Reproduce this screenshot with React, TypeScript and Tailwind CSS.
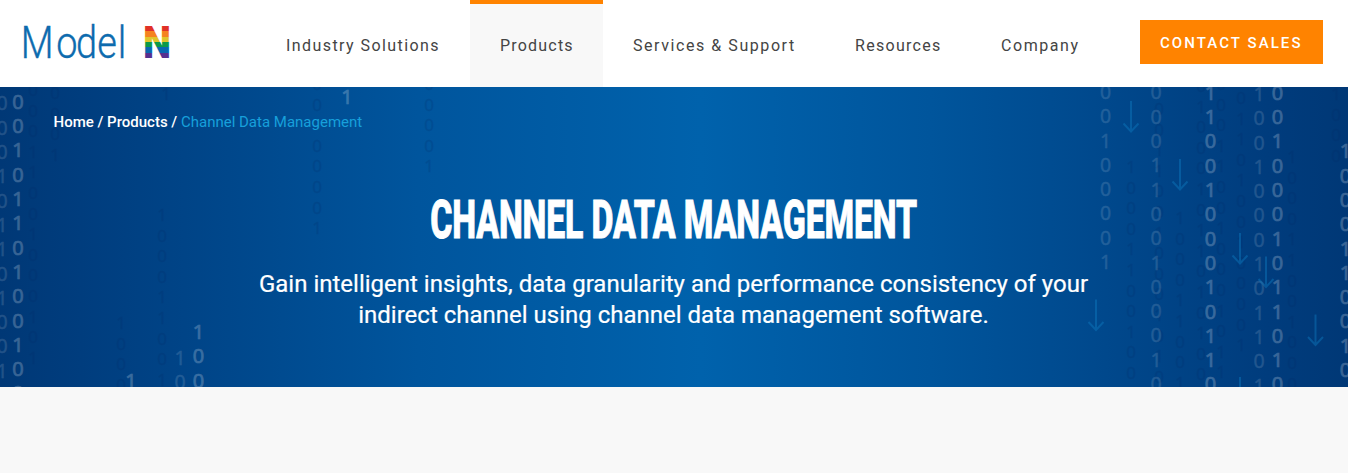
type Stream = { x: number; y: number; bits: string; tone: "bright" | "soft" | "dark" };

const streams: Stream[] = [
  { x: 33, y: 90, bits: "00011001000101", tone: "dark" },
  { x: 55, y: 93, bits: "0001", tone: "dark" },
  { x: 121, y: 323, bits: "1000", tone: "dark" },
  { x: 162, y: 215, bits: "100011001", tone: "dark" },
  { x: 166, y: 94, bits: "1", tone: "dark" },
  { x: 317, y: 84, bits: "00 00001", tone: "dark" },
  { x: 429, y: 84, bits: "00001", tone: "dark" },
  { x: 1131, y: 167, bits: "10001100100", tone: "dark" },
  { x: 1159, y: 109, bits: "00110010001010", tone: "dark" },
  { x: 1180, y: 218, bits: "100011001", tone: "dark" },
  { x: 1201, y: 86, bits: "010001011010100", tone: "dark" },
  { x: 1221, y: 84, bits: "000110010001011", tone: "dark" },
  { x: 1241, y: 98, bits: "0110100100001", tone: "dark" },
  { x: 1292, y: 157, bits: "100011001000", tone: "dark" },
  { x: 1336, y: 94, bits: "1000", tone: "dark" },
  { x: 2, y: 103.5, bits: "000101101001", tone: "soft" },
  { x: 180, y: 358, bits: "10", tone: "soft" },
  { x: 1105.5, y: 92, bits: "00100001", tone: "soft" },
  { x: 1156, y: 92.5, bits: "0001100100010", tone: "soft" },
  { x: 1259, y: 94, bits: "1001000101101", tone: "soft" },
  { x: 18, y: 101.7, bits: "0010110100100", tone: "bright" },
  { x: 131, y: 380.7, bits: "1", tone: "bright" },
  { x: 198.5, y: 332, bits: "100", tone: "bright" },
  { x: 347, y: 97, bits: "1", tone: "bright" },
  { x: 1210.5, y: 92.7, bits: "1100100010110", tone: "bright" },
  { x: 1277.5, y: 92.7, bits: "0010001011010", tone: "bright" },
  { x: 1345.5, y: 151.2, bits: "1000110010", tone: "bright" },
];

const tones = {
  bright: { fill: "#ffffff", opacity: 0.22, pitch: 24.3, size: 20, weight: 500 },
  soft: { fill: "#ffffff", opacity: 0.13, pitch: 24.3, size: 19.5, weight: 500 },
  dark: { fill: "#002a66", opacity: 0.2, pitch: 20.6, size: 17, weight: 500 },
};

const arrows = [
  [1131, 101],
  [1180, 159],
  [1240, 233],
  [1266, 256.5],
  [1096, 299.5],
  [1315.5, 314.5],
  [1240, 377],
];

function BinaryRain() {
  return (
    <svg
      className="absolute inset-0 h-full w-full"
      viewBox="0 87 1348 300"
      preserveAspectRatio="none"
      aria-hidden="true"
    >
      {streams.map((s, i) => {
        const t = tones[s.tone];
        return (
          <g
            key={i}
            fill={t.fill}
            stroke={t.fill}
            strokeWidth={s.tone === "bright" ? 0.7 : 0.4}
            opacity={t.opacity}
            fontSize={t.size}
            fontWeight={t.weight}
            fontFamily="Open Sans, sans-serif"
            textAnchor="middle"
          >
            {s.bits.split("").map((b, j) =>
              b === " " ? null : (
                <text key={j} x={s.x} y={s.y + j * t.pitch + t.size * 0.357}>
                  {b}
                </text>
              ),
            )}
          </g>
        );
      })}
      <g stroke="#0f7fc4" strokeOpacity="0.42" strokeWidth="2" fill="none">
        {arrows.map(([x, y], i) => (
          <path key={i} d={`M${x} ${y}v30.5M${x - 7.5} ${y + 22.5}l7.5 8l7.5 -8`} />
        ))}
      </g>
    </svg>
  );
}

function Logo() {
  return (
    <svg className="block h-10 w-[150px]" viewBox="22 22 150 40" role="img" aria-label="Model N">
      <defs>
        <linearGradient id="stripes" gradientUnits="userSpaceOnUse" x1="0" y1="26" x2="0" y2="58">
          <stop offset="0.167" stopColor="#e03127" />
          <stop offset="0.167" stopColor="#f58220" />
          <stop offset="0.333" stopColor="#f58220" />
          <stop offset="0.333" stopColor="#dfc42c" />
          <stop offset="0.5" stopColor="#dfc42c" />
          <stop offset="0.5" stopColor="#0b9a49" />
          <stop offset="0.667" stopColor="#0b9a49" />
          <stop offset="0.667" stopColor="#0a68b0" />
          <stop offset="0.833" stopColor="#0a68b0" />
          <stop offset="0.833" stopColor="#56308f" />
        </linearGradient>
      </defs>
      <text
        transform="translate(20.7 57.7) scale(0.87 1)"
        x="0 41 63.5 88 111.5"
        y="0"
        fontFamily="Roboto, sans-serif"
        fontWeight="300"
        fontSize="43.5"
        fill="#0d6bae"
        stroke="#0d6bae"
        strokeWidth="0.4"
      >
        Model
      </text>
      <text x="143" y="57.7" fontFamily="Roboto, sans-serif" fontWeight="900" fontSize="44.5" fill="url(#stripes)" textLength="28" lengthAdjust="spacingAndGlyphs">
        N
      </text>
    </svg>
  );
}

const navItems = [
  { label: "Industry Solutions", box: "w-[214px] tracking-[1.43px]" },
  { label: "Products", box: "w-[133px] tracking-[1.2px]", active: true },
  { label: "Services & Support", box: "w-[222px] tracking-[1.56px]" },
  { label: "Resources", box: "w-[146px] tracking-[1.3px]" },
  { label: "Company", box: "w-[138px] tracking-[1.55px]" },
];

export default function App() {
  return (
    <div className="h-[473px] w-[1348px] overflow-hidden bg-[#f8f8f8] font-['Roboto',sans-serif]">
      <header className="flex h-[87px] items-start bg-white pl-[22px]">
        <a href="#" className="mt-[22px]">
          <Logo />
        </a>
        <nav className="ml-[84px] flex h-full">
          {navItems.map((item) => (
            <a
              key={item.label}
              href="#"
              className={`flex h-full items-center justify-start border-t-4 pl-[30px] whitespace-nowrap text-base text-[#444] ${item.box} ${
                item.active ? "border-[#ff8300] bg-[#f8f8f8]" : "border-transparent"
              }`}
            >
              {item.label}
            </a>
          ))}
        </nav>
        <a
          href="#"
          className="mt-5 ml-[31px] flex h-11 w-[183px] items-center pt-[2px] pl-5 whitespace-nowrap bg-[#ff8300] text-[15px] font-medium tracking-[2.07px] text-white"
        >
          CONTACT SALES
        </a>
      </header>
      <section className="relative h-[300px] overflow-hidden bg-[linear-gradient(90deg,#003876_0%,#003d7e_6%,#00478b_17%,#00559d_31%,#0062ac_52%,#00559c_69%,#00488c_82%,#003c7d_94%,#003876_100%)]">
        <BinaryRain />
        <div className="relative flex flex-col items-center text-white">
          <p className="w-full pt-[25px] pl-[53.5px] text-[15px] leading-5 font-medium">
            <a href="#">Home</a> / <a href="#">Products</a> /{" "}
            <span className="font-normal text-[#17a0db]">Channel Data Management</span>
          </p>
          <h1 className="mt-[57px] flex h-[60px] scale-x-[0.62] items-center whitespace-nowrap text-[54.5px] leading-none font-extrabold tracking-[-0.2px] [-webkit-text-stroke:1px_white]">
            CHANNEL DATA MANAGEMENT
          </h1>
          <p className="mt-[20px] pr-px text-center text-2xl leading-[31px] [-webkit-text-stroke:0.2px_white]">
            Gain intelligent insights, data granularity and performance consistency of your
            <br />
            indirect channel using channel data management software.
          </p>
        </div>
      </section>
    </div>
  );
}
